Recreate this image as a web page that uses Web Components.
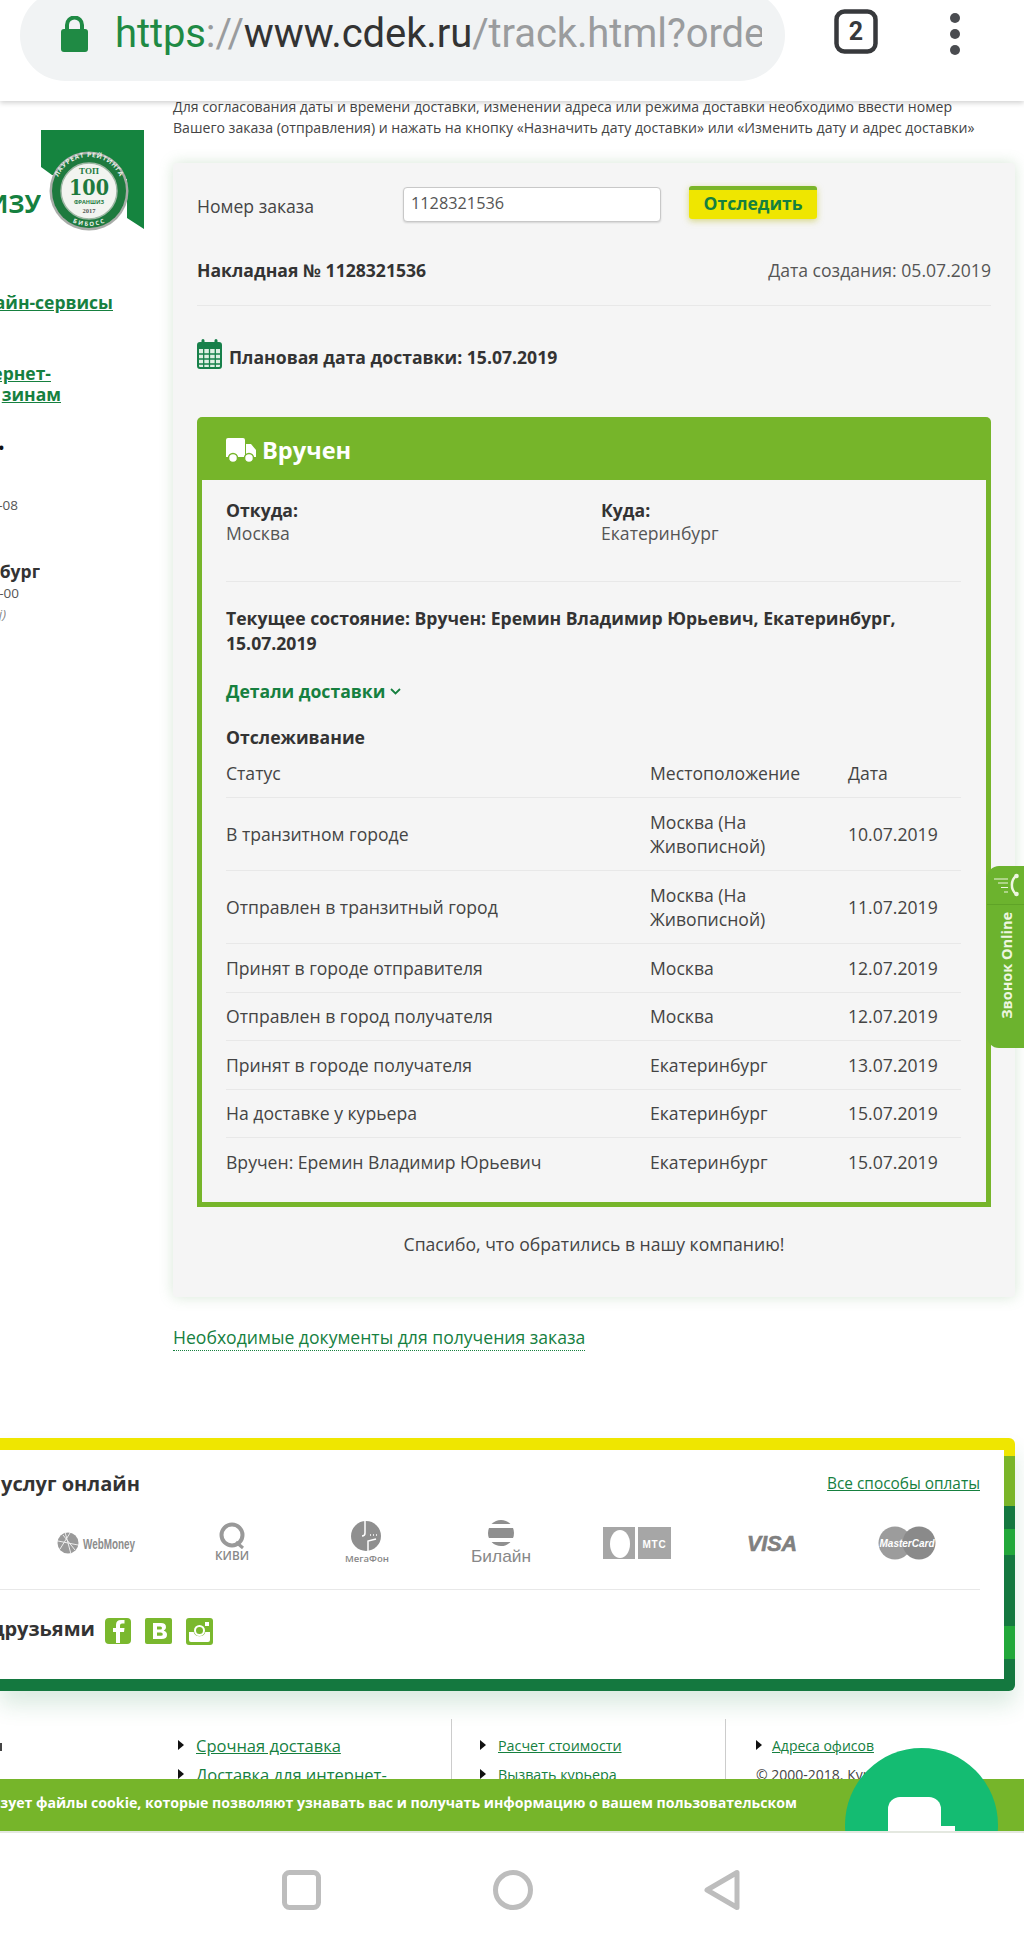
<!DOCTYPE html>
<html lang="ru"><head><meta charset="utf-8"><title>СДЭК</title>
<style>
html,body{margin:0;padding:0;background:#fff}
body{font-family:"Open Sans","Noto Sans",sans-serif;color:#333;width:1024px;height:1950px;overflow:hidden}
</style></head><body>
<cdek-page>
  <top-bar slot="top"></top-bar>
  <side-col slot="side"></side-col>
  <intro-text slot="main"></intro-text>
  <track-card slot="main"></track-card>
  <doc-link slot="main"></doc-link>
  <pay-box slot="wide"></pay-box>
  <foot-links slot="wide"></foot-links>
  <call-tab slot="over"></call-tab>
  <cookie-bar slot="over"></cookie-bar>
  <chat-btn slot="over"></chat-btn>
  <nav-bar slot="nav"></nav-bar>
</cdek-page>
<script>
function def(name, css, html){
  customElements.define(name, class extends HTMLElement{
    constructor(){super();const r=this.attachShadow({mode:'open'});r.innerHTML='<style>'+css+'</style>'+html;}
  });
}
def('cdek-page',`
:host{display:flex;flex-direction:column;width:1024px;height:1950px;overflow:hidden}
.view{position:relative;height:1735px;overflow:hidden;flex:none;margin-top:-5px;background:#fff}
.cols{display:flex;align-items:flex-start}
.side{width:173px;flex:none}
.main{width:842px;flex:none}
.top{position:relative;z-index:5;flex:none}
.nav{flex:1;position:relative;z-index:5}
`,`<div class="top"><slot name="top"></slot></div>
<div class="view"><div class="cols"><div class="side"><slot name="side"></slot></div><div class="main"><slot name="main"></slot></div></div>
<slot name="wide"></slot><slot name="over"></slot></div>
<div class="nav"><slot name="nav"></slot></div>`);

def('top-bar',`
:host{display:block;height:101px;background:#fff;box-shadow:0 2px 5px rgba(0,0,0,.18);overflow:hidden}
.row{display:flex;align-items:flex-start}
.pill{width:765px;height:91px;margin:-10px 0 0 20px;background:#f1f3f4;border-radius:46px;display:flex;align-items:center;flex:none;box-sizing:border-box;padding:0 0 4px 41px}
.lock{flex:none;margin-right:27px}
.url{font:400 40px/48px Roboto,sans-serif;letter-spacing:-.1px;white-space:nowrap;width:647px;overflow:hidden;color:#9a9c9e}
.g{color:#1f8a44}.d{color:#333}
.tab{flex:none;margin:9px 0 0 49px}
.more{flex:none;margin:12px 0 0 71px}
`,`<div class="row"><div class="pill">
<svg class="lock" width="27" height="36" viewBox="0 0 27 36"><path d="M6 15V9a7.500 7.500 0 0 1 15 0v6" fill="none" stroke="#1f8a44" stroke-width="4"/><rect x="0" y="13" width="27" height="23" rx="3" fill="#1f8a44"/></svg>
<div class="url"><span class="g">https</span>://<span class="d">www.cdek.ru</span>/track.html?orde</div></div>
<svg class="tab" width="44" height="45" viewBox="0 0 44 45"><rect x="2.500" y="2.500" width="39" height="40" rx="8" fill="none" stroke="#37393c" stroke-width="4.500"/><text x="22" y="31" text-anchor="middle" font-family="Roboto,sans-serif" font-weight="700" font-size="25" fill="#37393c">2</text></svg>
<svg class="more" width="12" height="44" viewBox="0 0 12 44"><circle cx="6" cy="6" r="5" fill="#4a4c50"/><circle cx="6" cy="22" r="5" fill="#4a4c50"/><circle cx="6" cy="38" r="5" fill="#4a4c50"/></svg>
</div>`);

def('side-col',`
:host{display:flex;flex-direction:column;color:#333}
.l{display:flex;justify-content:flex-end;overflow:hidden;white-space:nowrap}
a{color:#16803f;font-weight:700;font-size:17.500px;line-height:21px;text-decoration:underline}
.badge{display:flex;margin-top:33px;height:101px}
.izu{width:41px;display:flex;justify-content:flex-end;overflow:hidden;font:700 25px/30px "Open Sans",sans-serif;color:#15803f;margin-top:59px;height:30px;position:relative}
.small{font-size:13.500px;line-height:18px;color:#555}
`,`<div class="badge"><div class="izu">ИЗУ</div>
<svg width="105" height="102" viewBox="0 0 105 102" style="margin-left:-1px;flex:none">
<defs><path id="ra" d="M15 62a34 34 0 0 1 68 0"/><path id="rb" d="M20 72a31 31 0 0 0 58 0"/></defs>
<path d="M1 1H104V100L87 89V50L12 46 1 38Z" fill="#15843f"/>
<circle cx="49" cy="62" r="39.500" fill="#a8aca8"/><circle cx="49" cy="62" r="37" fill="#1e7a3e"/><circle cx="49" cy="62" r="28" fill="#f2f4f0" stroke="#9fb8a5" stroke-width="1.500"/>
<text font-family="'Open Sans',sans-serif" font-size="6.500" font-weight="700" fill="#e8f0e8" letter-spacing=".7"><textPath href="#ra" startOffset="50%" text-anchor="middle">ЛАУРЕАТ РЕЙТИНГА</textPath></text>
<text font-family="'Open Sans',sans-serif" font-size="6" font-weight="700" fill="#e8f0e8" letter-spacing=".8" dy="5"><textPath href="#rb" startOffset="50%" text-anchor="middle">БИБОСС</textPath></text>
<text x="49" y="45" text-anchor="middle" font-family="'Liberation Serif',serif" font-size="9" font-weight="700" fill="#1e7a3e">ТОП</text>
<text x="49" y="66" text-anchor="middle" font-family="'DejaVu Serif',serif" font-size="22" font-weight="700" fill="#1e7a3e" textLength="40" lengthAdjust="spacingAndGlyphs">100</text>
<text x="49" y="75" text-anchor="middle" font-family="'Open Sans',sans-serif" font-size="5.500" font-weight="700" fill="#1e7a3e">ФРАНШИЗ</text>
<text x="49" y="84" text-anchor="middle" font-family="'Liberation Serif',serif" font-size="6.500" font-weight="700" fill="#555">2017</text>
</svg></div>
<div class="l" style="width:113px;margin-top:62px"><a>айн-сервисы</a></div>
<div class="l" style="width:51px;margin-top:50px"><a>ернет-</a></div>
<div class="l" style="width:61px"><a>зинам</a></div>
<div class="l" style="width:4px;margin-top:35px;font:700 14px/16px 'Open Sans',sans-serif;color:#111">•</div>
<div class="l small" style="width:18px;margin-top:40px">-08</div>
<div class="l" style="width:40px;margin-top:45px;font-weight:700;font-size:17.500px;line-height:24px">бург</div>
<div class="l small" style="width:19px;margin-top:1px">-00</div>
<div class="l small" style="width:6px;margin-top:3px;font-style:italic;color:#888">j)</div>`);

def('intro-text',`
:host{display:block;font-size:14.100px;line-height:21px;color:#444;white-space:nowrap}
`,`Для согласования даты и времени доставки, изменении адреса или режима доставки необходимо ввести номер<br>Вашего заказа (отправления) и нажать на кнопку «Назначить дату доставки» или «Изменить дату и адрес доставки»`);

def('track-card',`
:host{display:block;margin-top:25px;background:#f5f5f5;border-radius:4px;box-shadow:0 0 14px rgba(110,170,110,.28);padding:23px 24px 41px;font-size:17.600px;color:#333}
.form{display:flex;align-items:flex-start;height:35px}
.lab{width:206px;line-height:35px;color:#444;padding-top:3px;box-sizing:border-box}
.inp{width:258px;height:35px;box-sizing:border-box;margin-top:1px;background:#fff;border:1px solid #c8c8c8;border-radius:4px;box-shadow:0 1px 2px rgba(0,0,0,.14);padding:0 7px;font-size:16.300px;line-height:30px;color:#555}
.btn{margin-left:28px;width:128px;height:33px;box-sizing:border-box;background:#efe600;border-top:4px solid #7ab528;border-radius:3px;box-shadow:0 2px 6px rgba(190,190,40,.55);text-align:center;font-weight:700;font-size:17.500px;line-height:27px;color:#15803f}
.bill{display:flex;justify-content:space-between;margin-top:37px;line-height:24px;padding-bottom:23px;border-bottom:1px solid #e8e8e8}
.bill b{font-weight:700}
.bill span{color:#555}
.plan{display:flex;align-items:center;margin-top:32px;font-weight:700;line-height:24px;height:31px}
.plan svg{flex:none;margin-right:7px}
.plan span{margin-top:6px}
.thanks{margin-top:25px;text-align:center;line-height:24px;color:#444}
`,`<div class="form"><div class="lab">Номер заказа</div><div class="inp">1128321536</div><div class="btn">Отследить</div></div>
<div class="bill"><b>Накладная № 1128321536</b><span>Дата создания: 05.07.2019</span></div>
<div class="plan"><svg width="25" height="31" viewBox="0 0 25 31"><rect x="1" y="5" width="23" height="25" rx="2" fill="#dff0e4" stroke="#17804a" stroke-width="2"/><rect x="1" y="5" width="23" height="6" fill="#17804a"/><path d="M1 16H24M1 21H24M1 26H24M6.700 11V30M12.500 11V30M18.300 11V30" stroke="#17804a" stroke-width="1.300"/><path d="M6 7V2.500M19 7V2.500" stroke="#17804a" stroke-width="3" stroke-linecap="round"/></svg><span>Плановая дата доставки: 15.07.2019</span></div>
<status-box></status-box>
<div class="thanks">Спасибо, что обратились в нашу компанию!</div>`);

def('status-box',`
:host{display:block;margin-top:48px}
.head{height:63px;background:#76b52a;border-radius:5px 5px 0 0;display:flex;align-items:center;box-sizing:border-box;padding:3px 0 0 29px;color:#fff;font-weight:700;font-size:23.600px}
.head svg{margin-right:6px;flex:none}
.body{border:5px solid #76b52a;border-top:0;padding:18px 25px 16px 24px;font-size:17.600px;color:#333}
.ft{display:grid;grid-template-columns:375px 1fr;padding-bottom:36px;border-bottom:1px solid #e8e8e8;line-height:23px}
.ft b{display:block;font-weight:700;line-height:24px}
.ft span{color:#555}
.cur{margin-top:24px;font-weight:700;line-height:25px}
.det{margin-top:23px;font-weight:700;line-height:24px;color:#16803f;display:flex;align-items:center;gap:5px}
.h{margin-top:22px;font-weight:700;line-height:24px}
`,`<div class="head"><svg width="30" height="25" viewBox="0 0 30 25" fill="#fff"><path d="M0 2a2 2 0 0 1 2-2h15a2 2 0 0 1 2 2v17H0zM20 6h5l5 6v7H20z"/><circle cx="7" cy="20" r="4.500" stroke="#76b52a" stroke-width="1.500"/><circle cx="23" cy="20" r="4.500" stroke="#76b52a" stroke-width="1.500"/></svg>Вручен</div>
<div class="body">
<div class="ft"><div><b>Откуда:</b><span>Москва</span></div><div><b>Куда:</b><span>Екатеринбург</span></div></div>
<div class="cur">Текущее состояние: Вручен: Еремин Владимир Юрьевич, Екатеринбург, 15.07.2019</div>
<div class="det">Детали доставки<svg width="11" height="7" viewBox="0 0 11 7"><path d="M1 1l4.500 4.500L10 1" fill="none" stroke="#16803f" stroke-width="1.800"/></svg></div>
<div class="h">Отслеживание</div>
<track-table></track-table>
</div>`);

customElements.define('track-table', class extends HTMLElement{
  constructor(){super();
    const rows=[['В транзитном городе','Москва (На Живописной)','10.07.2019'],['Отправлен в транзитный город','Москва (На Живописной)','11.07.2019'],['Принят в городе отправителя','Москва','12.07.2019'],['Отправлен в город получателя','Москва','12.07.2019'],['Принят в городе получателя','Екатеринбург','13.07.2019'],['На доставке у курьера','Екатеринбург','15.07.2019'],['Вручен: Еремин Владимир Юрьевич','Екатеринбург','15.07.2019']];
    this.attachShadow({mode:'open'}).innerHTML=`<style>
:host{display:block;font-size:17.600px;color:#444}
.r{display:grid;grid-template-columns:424px 198px 113px;align-items:center;line-height:24.500px;padding:11.500px 0;border-top:1px solid #e8e8e8}
.r.t{border-top:0;padding:12px 0 11.500px}
.r div:nth-child(2){padding-right:30px}
</style><div class="r t"><div>Статус</div><div style="white-space:nowrap">Местоположение</div><div>Дата</div></div>`+rows.map(r=>`<div class="r"><div>${r[0]}</div><div>${r[1]}</div><div>${r[2]}</div></div>`).join('');
  }
});

def('doc-link',`
:host{display:block;margin-top:28px;line-height:24px;font-size:17.600px}
a{color:#16803f;border-bottom:1px dotted #16803f;padding-bottom:1px}
`,`<a>Необходимые документы для получения заказа</a>`);

def('pay-box',`
:host{display:block;margin-top:89px;width:1015px;height:253px;box-sizing:border-box;padding:12px 11px 12px 0;border-radius:0 6px 6px 0;
background:linear-gradient(to bottom,#efe600 0 18px,#7ab528 18px 68px,#14783f 68px 91px,#22a83a 91px 117px,#14783f 117px 188px,#22a83a 188px 221px,#14783f 221px);
box-shadow:0 14px 22px rgba(30,130,70,.16)}
.in{background:#fff;height:229px;padding-top:22px;box-sizing:border-box;padding-right:24px}
.t1{display:flex;justify-content:space-between;line-height:24px}
.cut{display:flex;justify-content:flex-end;overflow:hidden;white-space:nowrap;font-weight:700;font-size:20px;color:#333}
.all{font-size:15.400px;color:#16803f;text-decoration:underline}
.logos{display:grid;grid-template-columns:repeat(7,135px);padding-left:29px;height:46px;margin-top:24px;margin-bottom:23px;align-items:center;justify-items:center;border:0}
hr{border:0;border-top:1px solid #e8e8e8;margin:0}
.soc{display:flex;align-items:flex-start;margin-top:28px}
.soc .cut{width:95px;line-height:22px;margin-right:10px}
.soc svg{flex:none;margin-right:14px}
`,`<div class="in">
<div class="t1"><div class="cut" style="width:140px">услуг онлайн</div><div class="all">Все способы оплаты</div></div>
<div class="logos">
<svg width="80" height="24" viewBox="0 0 80 24"><circle cx="11" cy="12" r="10.500" fill="#9a9a9a"/><path d="M6 4l12 15M13 2L3 18M1 10l20 4M8 1l6 22" stroke="#eee" stroke-width="1"/><text x="26" y="18" font-family="'Liberation Sans',sans-serif" font-weight="700" font-size="15" fill="#8c8c8c" textLength="52" lengthAdjust="spacingAndGlyphs">WebMoney</text></svg>
<svg width="36" height="42" viewBox="0 0 36 42"><circle cx="18" cy="13" r="10.500" fill="none" stroke="#999" stroke-width="4"/><path d="M22 20l7 6" stroke="#999" stroke-width="3"/><text x="18" y="38" text-anchor="middle" font-family="'Open Sans',sans-serif" font-weight="600" font-size="12" fill="#888" textLength="34" lengthAdjust="spacingAndGlyphs">КИВИ</text></svg>
<svg width="46" height="44" viewBox="0 0 46 44"><circle cx="22" cy="15" r="15" fill="#8f8f8f"/><path d="M21 0V12q0 3-3 3M24 30V20l8-2" fill="none" stroke="#fff" stroke-width="1.500"/><path d="M26 14h1M29 14h1M32 14h1" stroke="#fff" stroke-width="1.500"/><text x="23" y="41" text-anchor="middle" font-family="'Open Sans',sans-serif" font-weight="600" font-size="9" fill="#888" textLength="44" lengthAdjust="spacingAndGlyphs">МегаФон</text></svg>
<svg width="62" height="46" viewBox="0 0 62 46"><defs><clipPath id="bc"><circle cx="30" cy="13" r="13"/></clipPath></defs><g clip-path="url(#bc)" fill="#8f8f8f"><rect x="10" y="0" width="40" height="4"/><rect x="10" y="8" width="40" height="10"/><rect x="10" y="22" width="40" height="4"/></g><text x="0" y="42" font-family="'Liberation Sans',sans-serif" font-size="17" fill="#888" textLength="60" lengthAdjust="spacingAndGlyphs">Билайн</text></svg>
<svg width="68" height="32" viewBox="0 0 68 32"><rect width="32" height="32" fill="#a6a6a6"/><ellipse cx="17" cy="17" rx="10" ry="14" fill="#fff"/><rect x="35" width="33" height="32" fill="#a6a6a6"/><text x="51.500" y="21" text-anchor="middle" font-family="'Liberation Sans',sans-serif" font-weight="700" font-size="10" letter-spacing=".8" fill="#fff">МТС</text></svg>
<svg width="52" height="20" viewBox="0 0 52 20"><text x="1" y="18" font-family="'Liberation Sans',sans-serif" font-weight="700" font-style="italic" font-size="22" fill="#808080" stroke="#808080" stroke-width=".6" textLength="50" lengthAdjust="spacingAndGlyphs">VISA</text></svg>
<svg width="58" height="34" viewBox="0 0 58 34"><circle cx="17" cy="17" r="16.500" fill="#9c9c9c"/><circle cx="41" cy="17" r="16.500" fill="#8a8a8a"/><text x="29" y="21" text-anchor="middle" font-family="'Liberation Sans',sans-serif" font-weight="700" font-style="italic" font-size="11" fill="#fff" textLength="55" lengthAdjust="spacingAndGlyphs">MasterCard</text></svg>
</div>
<hr>
<div class="soc"><div class="cut">друзьями</div>
<svg width="26" height="26" viewBox="0 0 26 26"><rect width="26" height="26" rx="4" fill="#7ab82e"/><path d="M15 25V14h4l.500-4H15V7.500q0-2 2-2h2.500V2H16q-5 0-5 5v3H8v4h3v11z" fill="#fff"/></svg>
<svg width="27" height="26" viewBox="0 0 27 26"><rect width="27" height="26" rx="2" fill="#7ab82e"/><path d="M8 5h8q5 0 5 4.200 0 2.600-2.300 3.500 3.300.8 3.300 4 0 4.300-5.500 4.300H8zM12 8.400v3.200h3.300q1.700 0 1.700-1.600t-1.700-1.600zM12 14.600v3.200h3.800q2 0 2-1.600t-2-1.600z" fill="#fff" fill-rule="evenodd"/></svg>
<svg width="27" height="27" viewBox="0 0 27 27"><rect width="27" height="27" rx="3" fill="#7ab82e"/><path d="M3 14h4.600a6.200 6.200 0 0 0 11.800 0H24v8a2 2 0 0 1-2 2H5a2 2 0 0 1-2-2z" fill="#fff"/><circle cx="13.500" cy="12.500" r="4.500" fill="none" stroke="#fff" stroke-width="2"/><rect x="19" y="4" width="4" height="4" fill="#fff"/></svg>
</div>
</div>`);

def('foot-links',`
:host{display:flex;margin-top:28px;height:120px;color:#444}
.mark{width:2px;height:8px;background:#444;margin-top:24px;flex:none}
.c{box-sizing:border-box;flex:none}
.c1{width:449px;padding-left:176px;font-size:16.500px}
.c2{width:274px;padding-left:28px;font-size:14.300px;border-left:1px solid #ccc}
.c3{flex:1;padding-left:30px;font-size:14px;border-left:1px solid #ccc}
ul{list-style:none;margin:0;padding:12px 0 0}
li{display:flex;align-items:center;height:29px;white-space:nowrap}
i{display:block;width:0;height:0;border-left:6px solid #111;border-top:5px solid transparent;border-bottom:5px solid transparent;margin-right:12px;flex:none}
.c2 i{margin-right:12px}.c3 i{margin-right:10px}
a{color:#16803f;text-decoration:underline}
`,`<div class="mark"></div>
<div class="c c1"><ul><li><i></i><a>Срочная доставка</a></li><li><i></i><a>Доставка для интернет-</a></li></ul></div>
<div class="c c2"><ul><li><i></i><a>Расчет стоимости</a></li><li><i></i><a>Вызвать курьера</a></li></ul></div>
<div class="c c3"><ul><li><i></i><a>Адреса офисов</a></li><li>© 2000-2018. Курьерская</li></ul></div>`);

def('call-tab',`
:host{position:absolute;left:987px;top:770px;width:37px;height:182px;background:#6cb32e;border-radius:12px 0 0 12px;display:flex;flex-direction:column;align-items:flex-start;color:#eef6e0}
svg{margin:7px 0 0 5px;flex:none}
.sep{width:100%;height:1px;background:#5fa327;margin-top:7px;flex:none}
.t{writing-mode:vertical-rl;transform:rotate(180deg);font:700 14.500px/20px "Open Sans",sans-serif;white-space:nowrap;margin:7px 0 0 10px}
`,`<svg width="28" height="24" viewBox="0 0 28 24"><path d="M2 6H16M6 10H16M9 14.500H16M12 19H16" stroke="#eef6e0" stroke-width="1.200"/><path d="M24 3C19 7 18 16 24 21" fill="none" stroke="#eef6e0" stroke-width="2.500"/><circle cx="24.500" cy="3" r="2.300" fill="#eef6e0"/><circle cx="24.500" cy="21" r="2.300" fill="#eef6e0"/></svg><div class="sep"></div><div class="t">Звонок Online</div>`);

def('cookie-bar',`
:host{position:absolute;left:0;right:0;top:1683px;height:52px;background:#76b52a;color:#fff;font-weight:700;font-size:14.150px;line-height:48px;display:flex}
.c{width:797px;display:flex;justify-content:flex-end;overflow:hidden;white-space:nowrap}
`,`<div class="c">зует файлы cookie, которые позволяют узнавать вас и получать информацию о вашем пользовательском</div>`);

def('chat-btn',`
:host{position:absolute;left:845px;top:1652px;width:153px;height:83px;overflow:hidden;display:block}
`,`<svg width="153" height="83" viewBox="0 0 153 83"><ellipse cx="76.500" cy="77" rx="76.500" ry="77" fill="#14bc72"/><rect x="43" y="49" width="53" height="50" rx="12" fill="#fff"/><path d="M94 78h16v10H94z" fill="#fff"/></svg>`);

def('nav-bar',`
:host{display:block;height:100%;background:#fff;border-top:2px solid #e4e8e0;box-sizing:border-box}
svg{display:block;margin:0}
.row{display:flex;padding:36px 0 0 280px;align-items:flex-start}
`,`<div class="row">
<svg width="42" height="42" viewBox="0 0 42 42"><rect x="4.500" y="3.500" width="34" height="35" rx="5" fill="none" stroke="#bdbdbd" stroke-width="5"/></svg>
<svg width="44" height="44" viewBox="0 0 44 44" style="margin-left:169px"><circle cx="22" cy="21" r="17.500" fill="none" stroke="#bdbdbd" stroke-width="5"/></svg>
<svg width="40" height="44" viewBox="0 0 40 44" style="margin-left:167px"><path d="M35 3.500V38.500L5 21Z" fill="none" stroke="#bdbdbd" stroke-width="5" stroke-linejoin="round"/></svg>
</div>`);
</script>
</body></html>
